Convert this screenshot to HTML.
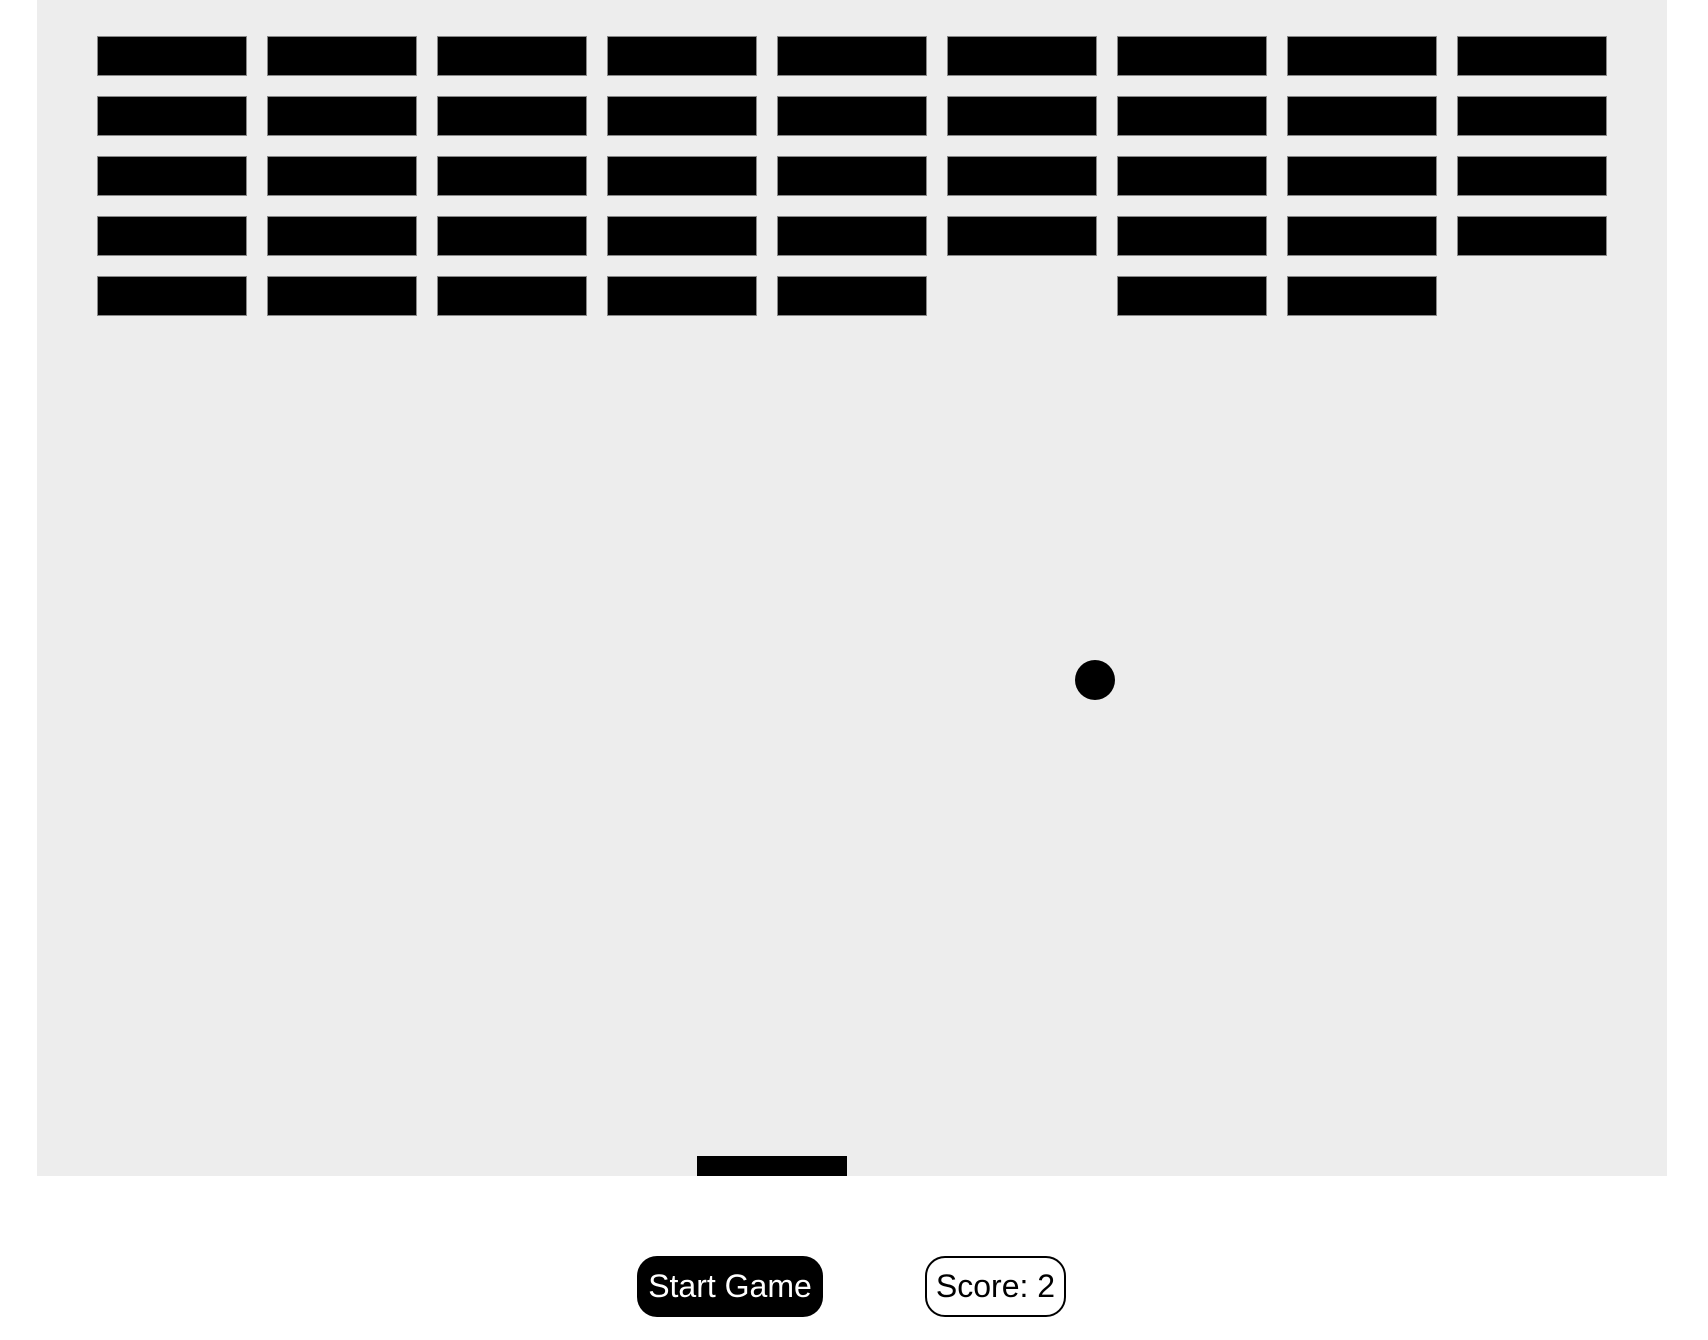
<!DOCTYPE html>
<html><head><style>
html,body{margin:0;padding:0;background:#fff;width:1708px;height:1340px;overflow:hidden;position:relative;font-family:"Liberation Sans",Arial,sans-serif}
#c{position:absolute;left:37px;top:0;width:1630px;height:1176px;background:#ededed;overflow:hidden}
.b{position:absolute;width:150px;height:40px;background:#000;box-shadow:0 0 0 1px #888 inset}
.btn{position:absolute;top:1256px;height:61px;box-sizing:border-box;border-radius:20px;font-size:32px;display:flex;align-items:center;justify-content:center}
</style></head><body>
<div id="c">
<div id="bricks"></div>
<div style="position:absolute;left:1038px;top:660px;width:40px;height:40px;border-radius:50%;background:#000"></div>
<div style="position:absolute;left:660px;top:1156px;width:150px;height:20px;background:#000"></div>
</div>
<div class="btn" style="left:637px;width:186px;background:#000;color:#fff">Start Game</div>
<div class="btn" style="left:925px;width:141px;border:2px solid #000;color:#000">Score: 2</div>
<script>
var h='';for(var r=0;r<5;r++)for(var c=0;c<9;c++){if(r==4&&(c==5||c==8))continue;h+='<div class="b" style="left:'+(60+c*170)+'px;top:'+(36+r*60)+'px"></div>';}
document.getElementById('bricks').innerHTML=h;
</script>
</body></html>
